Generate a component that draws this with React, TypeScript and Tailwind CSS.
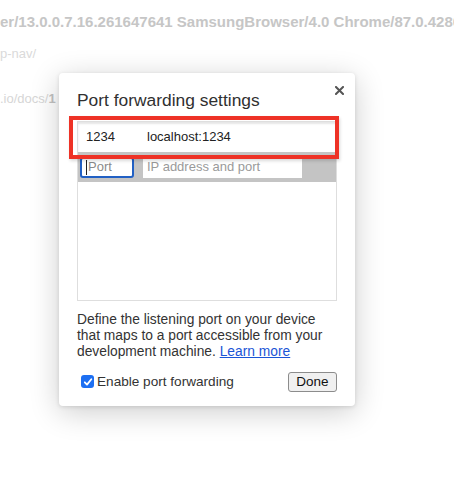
import React from "react";

function CloseIcon() {
  return (
    <svg width="9" height="9" viewBox="0 0 9 9" aria-hidden="true">
      <path d="M1 1L8 8M8 1L1 8" stroke="#555" strokeWidth="2" strokeLinecap="square" />
    </svg>
  );
}

function CheckBox() {
  return (
    <span className="flex h-[13px] w-[13px] items-center justify-center rounded-[3px] bg-[#1d6ff2]">
      <svg width="10" height="10" viewBox="0 0 10 10" aria-hidden="true">
        <path d="M1.8 5.3L4 7.6L8.3 2.2" fill="none" stroke="#fff" strokeWidth="1.8" strokeLinecap="round" strokeLinejoin="round" />
      </svg>
    </span>
  );
}

export default function App() {
  return (
    <div className="relative h-[478px] w-[454px] overflow-hidden bg-white font-['Liberation_Sans',Arial,sans-serif]">
      <div className="pt-[12px]">
        <div className="whitespace-nowrap text-[15px] font-bold leading-[20px] text-[#c6c6c6]">
          er/13.0.0.7.16.261647641 SamsungBrowser/4.0 Chrome/87.0.4280.141 Mobile Safari/537.36
        </div>
        <div className="mt-[14px] whitespace-nowrap text-[13px] leading-[16px] text-[#dadada]">p-nav/</div>
        <div className="mt-[29px] whitespace-nowrap text-[13px] leading-[16px] text-[#d6d6d6]">
          .io/docs/<span className="font-bold text-[#c2c2c2]">1</span>
        </div>
      </div>

      <div className="absolute left-[59px] top-[73px] flex h-[333px] w-[296px] flex-col rounded-[4px] bg-white px-[18px] pb-[14px] pt-[17px] text-[#333] shadow-[0_6px_30px_rgba(0,0,0,0.2),0_1px_4px_rgba(0,0,0,0.12)]">
        <button className="absolute right-[11px] top-[13px] flex h-[9px] w-[9px] items-center justify-center">
          <CloseIcon />
        </button>
        <h2 className="text-[17.4px] leading-[20px] text-[#303030]">Port forwarding settings</h2>

        <div className="mt-[11px] h-[180px] w-[260px] border border-[#dedede]">
          <div className="flex h-[30px] items-center pl-[8px] text-[13px] text-[#222] shadow-[inset_0_2px_2px_rgba(0,0,0,0.1)]">
            <span className="w-[61px]">1234</span>
            <span>localhost:1234</span>
          </div>
          <div className="flex h-[30px] items-center gap-[9px] bg-[#c4c4c4] pl-[2px]">
            <div className="flex h-[21px] w-[54px] items-center rounded-[3px] border-2 border-[#2160c4] bg-white pl-[4px] text-[13px] text-[#8a8a8a]">
              <span className="mr-[1px] h-[15px] w-px bg-[#222]" />
              Port
            </div>
            <div className="flex h-[22px] w-[159px] items-center bg-white pl-[4px] text-[13px] text-[#9a9a9a]">
              IP address and port
            </div>
          </div>
        </div>

        <p className="mt-[11px] text-[13.8px] leading-[16px] text-[#333]">
          Define the listening port on your device that maps to a port accessible from your development machine.{" "}
          <a className="text-[#1a55d6] underline">Learn more</a>
        </p>

        <div className="mt-auto flex items-center justify-between">
          <label className="flex items-center gap-[3px] pl-[4px] text-[13.6px] text-[#333]">
            <CheckBox />
            Enable port forwarding
          </label>
          <button className="h-[20px] w-[49px] rounded-[3px] border border-[#8c8c8c] bg-[#f0f0f0] text-[13.5px] leading-[18px] text-[#111]">
            Done
          </button>
        </div>

        <div className="pointer-events-none absolute left-[10px] top-[43px] h-[43px] w-[270px] border-4 border-[#ee3226] shadow-[1px_2px_3px_rgba(0,0,0,0.15)]" />
      </div>
    </div>
  );
}
